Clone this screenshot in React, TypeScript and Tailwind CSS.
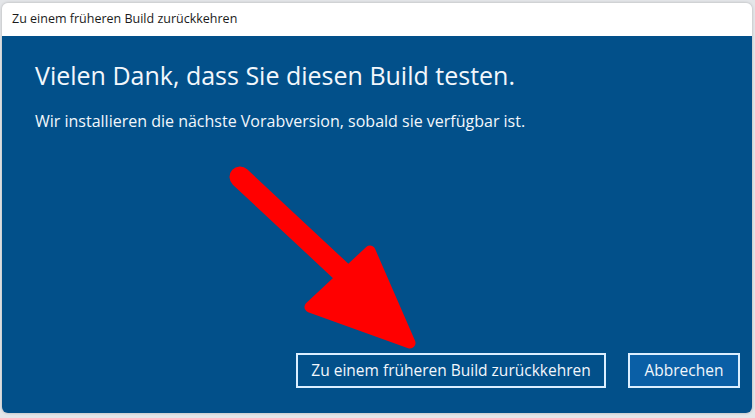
const sans = "font-['Segoe_UI','Open_Sans','Noto_Sans',sans-serif]";

function Arrow() {
  // red callout arrow pointing at the primary button
  return (
    <svg
      className="pointer-events-none absolute left-0 top-0"
      width="755"
      height="418"
      viewBox="0 0 755 418"
    >
      <line
        x1="240"
        y1="177"
        x2="345"
        y2="275"
        stroke="#ff0000"
        strokeWidth="21"
        strokeLinecap="round"
      />
      <polygon
        points="370,251 410,343 310,307"
        fill="#ff0000"
        stroke="#ff0000"
        strokeWidth="11"
        strokeLinejoin="round"
      />
    </svg>
  );
}

export default function App() {
  return (
    <div className={`relative h-[418px] w-[755px] overflow-hidden bg-[#e4e6e9] ${sans}`}>
      <div className="flex flex-col pl-[2px] pr-[3px] pt-[3px]">
        <div className="flex h-[410px] flex-col overflow-hidden rounded-[6px] shadow-[0_0_3px_rgba(0,0,0,0.25)]">
          <div className="flex h-[33px] items-center bg-white px-[10px] text-[12.5px] text-[#1b1b1b]">
            Zu einem früheren Build zurückkehren
          </div>
          <div className="flex flex-1 flex-col bg-[#02508a] px-[33px] pb-[25px] pt-[23px] text-[#f2f7fc]">
            <h1 className="text-[25px] leading-[32px]">
              Vielen Dank, dass Sie diesen Build testen.
            </h1>
            <p className="mt-[20px] text-[16px] leading-[20px]">
              Wir installieren die nächste Vorabversion, sobald sie verfügbar ist.
            </p>
            <div className="mt-auto flex justify-end gap-[22px]">
              <button className="h-[35px] w-[310px] border-2 border-[#dbeeff] text-[15.5px]">
                Zu einem früheren Build zurückkehren
              </button>
              <button className="-mr-[21px] h-[35px] w-[112px] border-2 border-[#dbeeff] bg-[#0a5fa6] text-[15.5px]">
                Abbrechen
              </button>
            </div>
          </div>
        </div>
        <div className="pl-[340px] pt-[1px] text-[13px] leading-[16px] text-[#333]">
          Erweiterter Start
        </div>
      </div>
      <Arrow />
    </div>
  );
}
